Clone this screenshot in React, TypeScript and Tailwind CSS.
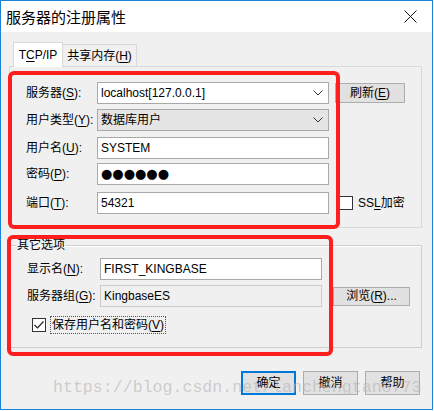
import React from "react";

function Hot({ pre, k, post = "):" }: { pre: string; k: string; post?: string }) {
  return (
    <span>
      {pre}(<span className="underline underline-offset-2">{k}</span>
      {post}
    </span>
  );
}

function Chevron() {
  return (
    <svg width="10" height="6" viewBox="0 0 10 6" className="mr-[5px]">
      <polyline points="0.5,0.5 5,5 9.5,0.5" fill="none" stroke="#333" strokeWidth="1" />
    </svg>
  );
}

function Field({ children, className = "" }: { children?: React.ReactNode; className?: string }) {
  return (
    <div className={`h-[22px] border border-[#a9a9a9] flex items-center pl-[3px] ${className}`}>
      {children}
    </div>
  );
}

function Btn({ children, className = "" }: { children: React.ReactNode; className?: string }) {
  return (
    <div className={`bg-[#e1e1e1] border border-[#adadad] flex items-center justify-center ${className}`}>
      {children}
    </div>
  );
}

export default function App() {
  return (
    <div className="relative w-[433px] h-[410px] border border-[#1883d7] flex flex-col bg-[#f0f0f0] text-[12px] leading-[16px] text-black font-['Liberation_Sans','Noto_Sans_CJK_SC',sans-serif]">
      {/* title bar */}
      <div className="h-[31px] bg-white flex items-center justify-between pl-[5px] pr-[15px]">
        <span className="text-[15px] leading-[20px] font-['Noto_Sans_CJK_SC',sans-serif]">服务器的注册属性</span>
        <svg width="13" height="13" viewBox="0 0 13 13">
          <path d="M0.5 0.5 L12.5 12.5 M12.5 0.5 L0.5 12.5" stroke="#111" strokeWidth="1" />
        </svg>
      </div>

      {/* tabs */}
      <div className="mt-[10px] ml-[12px] flex items-end h-[24px]">
        <div className="relative z-10 -mb-px h-[25px] w-[50px] bg-white border border-b-0 border-[#d9d9d9] flex items-center justify-center">
          <span>
            T<span className="underline underline-offset-2">C</span>P/IP
          </span>
        </div>
        <div className="h-[22px] w-[74px] bg-[#f0f0f0] border border-l-0 border-b-0 border-[#d9d9d9] flex items-center justify-center">
          <Hot pre="共享内存" k="H" post=")" />
        </div>
      </div>

      {/* tab panel */}
      <div className="ml-[8px] w-[413px] h-[162px] border border-[#d9d9d9] pt-[15px] pl-[16px] flex flex-col">
        <div className="flex items-center">
          <span className="w-[71px]">
            <Hot pre="服务器" k="S" />
          </span>
          <Field className="w-[232px] bg-white justify-between">
            <span>localhost[127.0.0.1]</span>
            <Chevron />
          </Field>
          <Btn className="ml-[6px] w-[70px] h-[20px]">
            <Hot pre="刷新" k="E" post=")" />
          </Btn>
        </div>
        <div className="flex items-center mt-[5px]">
          <span className="w-[71px]">
            <Hot pre="用户类型" k="Y" />
          </span>
          <Field className="w-[232px] bg-[#e5e5e5] justify-between">
            <span>数据库用户</span>
            <Chevron />
          </Field>
        </div>
        <div className="flex items-center mt-[6px]">
          <span className="w-[71px]">
            <Hot pre="用户名" k="U" />
          </span>
          <Field className="w-[232px] bg-white">
            <span>SYSTEM</span>
          </Field>
        </div>
        <div className="flex items-center mt-[4px]">
          <span className="w-[71px]">
            <Hot pre="密码" k="P" />
          </span>
          <Field className="w-[232px] bg-white">
            <span className="font-['DejaVu_Sans',sans-serif] text-[13px] tracking-[0px]">●●●●●●</span>
          </Field>
        </div>
        <div className="flex items-center mt-[7px]">
          <span className="w-[71px]">
            <Hot pre="端口" k="T" />
          </span>
          <Field className="w-[232px] bg-white">
            <span>54321</span>
          </Field>
          <div className="ml-[10px] w-[14px] h-[14px] bg-white border border-[#333]" />
          <span className="ml-[5px]">
            SS<span className="underline underline-offset-2">L</span>加密
          </span>
        </div>
      </div>

      {/* group box */}
      <fieldset className="mt-[9px] ml-[8px] w-[413px] h-[111px] border border-[#cfcfcf] shadow-[inset_1px_1px_0_#ffffff] pl-[17px]">
        <legend className="ml-[-11px] px-[1px] leading-[16px]">其它选项</legend>
        <div className="flex items-center mt-[5px]">
          <span className="w-[73px]">
            <Hot pre="显示名" k="N" />
          </span>
          <Field className="w-[222px] bg-white">
            <span>FIRST_KINGBASE</span>
          </Field>
        </div>
        <div className="flex items-center mt-[5px]">
          <span className="w-[73px]">
            <Hot pre="服务器组" k="G" />
          </span>
          <Field className="w-[222px] bg-[#f0f0f0] border-[#cccccc]">
            <span>KingbaseES</span>
          </Field>
          <Btn className="ml-[11px] w-[77px] h-[19px]">
            <span>
              浏览(<span className="underline underline-offset-2">R</span>)...
            </span>
          </Btn>
        </div>
        <div className="flex items-center mt-[9px] ml-[5px]">
          <div className="w-[14px] h-[14px] bg-white border border-[#333] flex items-center justify-center">
            <svg width="10" height="8" viewBox="0 0 10 8">
              <polyline points="0.5,4 3.5,7 9.5,0.5" fill="none" stroke="#222" strokeWidth="1.2" />
            </svg>
          </div>
          <span className="ml-[4px] px-[1px] border border-dotted border-[#555]">
            <Hot pre="保存用户名和密码" k="V" post=")" />
          </span>
        </div>
      </fieldset>

      {/* footer buttons */}
      <div className="mt-[23px] pr-[12px] flex justify-end gap-[7px]">
        <div className="w-[55px] h-[24px] bg-[#e1e1e1] border-2 border-[#0078d7] flex items-center justify-center">
          确定
        </div>
        <Btn className="w-[55px] h-[24px]">撤消</Btn>
        <Btn className="w-[55px] h-[24px]">帮助</Btn>
      </div>

      {/* annotation overlays */}
      <div className="absolute left-[7px] top-[70px] w-[332px] h-[158px] border-[4px] border-[#ff1e1e] rounded-[6px] pointer-events-none" />
      <div className="absolute left-[6px] top-[234px] w-[326px] h-[121px] border-[4px] border-[#ff1e1e] rounded-[6px] pointer-events-none" />
      <div className="absolute left-[52px] top-[377px] text-[16.6px] leading-[20px] text-[#b4b4b4]/60 font-['Liberation_Mono',monospace] pointer-events-none whitespace-nowrap">
        https://blog.csdn.net/lanchengtan8773
      </div>
    </div>
  );
}
